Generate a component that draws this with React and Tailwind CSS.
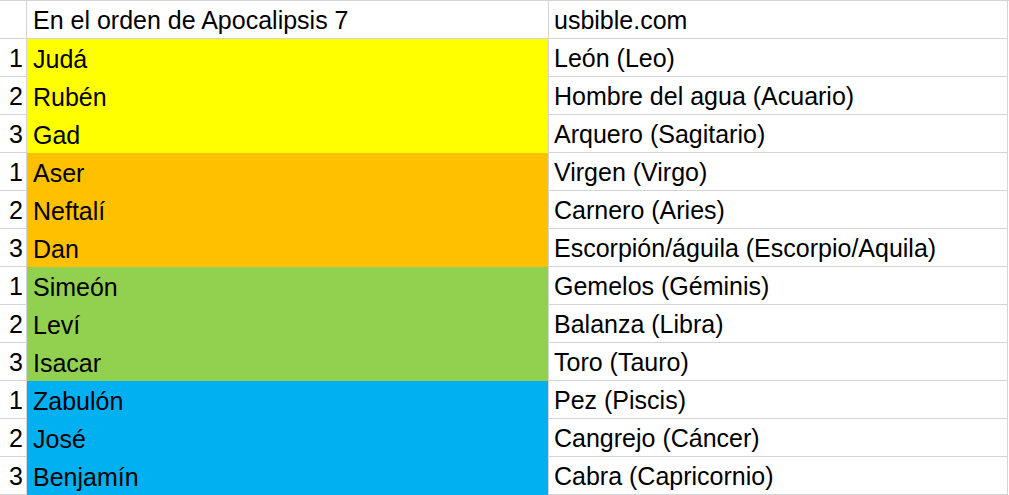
import React from 'react';

const rows = [
  { n: 1, tribe: 'Judá', sign: 'León (Leo)', fill: 'bg-[#ffff00]' },
  { n: 2, tribe: 'Rubén', sign: 'Hombre del agua (Acuario)', fill: 'bg-[#ffff00]' },
  { n: 3, tribe: 'Gad', sign: 'Arquero (Sagitario)', fill: 'bg-[#ffff00]' },
  { n: 1, tribe: 'Aser', sign: 'Virgen (Virgo)', fill: 'bg-[#ffc000]' },
  { n: 2, tribe: 'Neftalí', sign: 'Carnero (Aries)', fill: 'bg-[#ffc000]' },
  { n: 3, tribe: 'Dan', sign: 'Escorpión/águila (Escorpio/Aquila)', fill: 'bg-[#ffc000]' },
  { n: 1, tribe: 'Simeón', sign: 'Gemelos (Géminis)', fill: 'bg-[#92d050]' },
  { n: 2, tribe: 'Leví', sign: 'Balanza (Libra)', fill: 'bg-[#92d050]' },
  { n: 3, tribe: 'Isacar', sign: 'Toro (Tauro)', fill: 'bg-[#92d050]' },
  { n: 1, tribe: 'Zabulón', sign: 'Pez (Piscis)', fill: 'bg-[#00b0f0]' },
  { n: 2, tribe: 'José', sign: 'Cangrejo (Cáncer)', fill: 'bg-[#00b0f0]' },
  { n: 3, tribe: 'Benjamín', sign: 'Cabra (Capricornio)', fill: 'bg-[#00b0f0]' },
];

const font = { fontFamily: '"Liberation Sans", Arial, sans-serif' };

export default function App() {
  return (
    <div className="w-[1009px] h-[495px] bg-white text-black text-[25px] leading-none overflow-hidden" style={font}>
      <div className="flex h-[39px] border-t border-[#d4d4d4]">
        <div className="w-[27px] border-r border-b border-[#d4d4d4]" />
        <div className="w-[522px] flex items-center pl-[6px] pt-[2px] border-r border-b border-[#d4d4d4]">
          En el orden de Apocalipsis 7
        </div>
        <div className="w-[459px] flex items-center pl-[5px] pt-[2px] border-r border-b border-[#d4d4d4]">
          usbible.com
        </div>
      </div>
      {rows.map((r, i) => (
        <div key={i} className="flex h-[38px]">
          <div className="w-[27px] flex items-center justify-end pr-[3px] pt-[2px] border-r border-b border-[#d4d4d4]">
            {r.n}
          </div>
          <div className={`w-[522px] flex items-center pl-[6px] pt-[2px] border-r border-[#d4d4d4] ${r.fill}`}>
            {r.tribe}
          </div>
          <div className="w-[459px] flex items-center pl-[5px] pt-[2px] border-r border-b border-[#d4d4d4]">
            {r.sign}
          </div>
        </div>
      ))}
    </div>
  );
}
